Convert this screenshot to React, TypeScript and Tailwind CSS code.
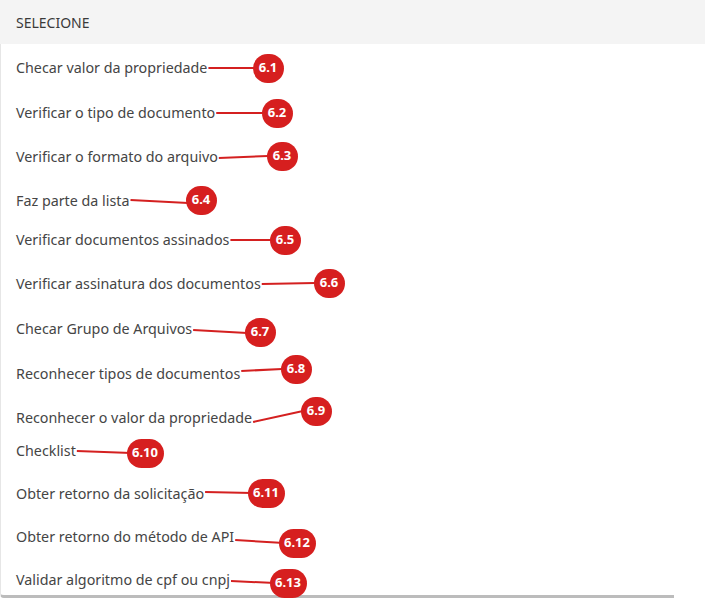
import React, { useLayoutEffect, useRef, useState } from "react";

type Item = {
  label: string;
  mt: string;
  badge: string;
  bx: number;
  by: number;
  bw: number;
  // line start y, line end x/y (start x comes from the measured text end)
  line: [number, number, number];
};

const ITEMS: Item[] = [
  { label: "Checar valor da propriedade", mt: "mt-[14px]", badge: "6.1", bx: 268, by: 68, bw: 31, line: [68, 256, 68] },
  { label: "Verificar o tipo de documento", mt: "mt-[25px]", badge: "6.2", bx: 277, by: 113, bw: 31, line: [113, 263, 113] },
  { label: "Verificar o formato do arquivo", mt: "mt-[24px]", badge: "6.3", bx: 282, by: 156, bw: 31, line: [158, 268, 156] },
  { label: "Faz parte da lista", mt: "mt-[24px]", badge: "6.4", bx: 201, by: 200, bw: 31, line: [200, 188, 203] },
  { label: "Verificar documentos assinados", mt: "mt-[19px]", badge: "6.5", bx: 285, by: 240, bw: 31, line: [240, 272, 240] },
  { label: "Verificar assinatura dos documentos", mt: "mt-[24px]", badge: "6.6", bx: 329, by: 283, bw: 31, line: [284, 315, 283] },
  { label: "Checar Grupo de Arquivos", mt: "mt-[25px]", badge: "6.7", bx: 260, by: 332, bw: 31, line: [330, 247, 333] },
  { label: "Reconhecer tipos de documentos", mt: "mt-[25px]", badge: "6.8", bx: 296, by: 369, bw: 31, line: [371, 282, 369] },
  { label: "Reconhecer o valor da propriedade", mt: "mt-[24px]", badge: "6.9", bx: 316, by: 411, bw: 31, line: [422, 303, 411] },
  { label: "Checklist", mt: "mt-[13px]", badge: "6.10", bx: 145, by: 453, bw: 37, line: [451, 131, 453] },
  { label: "Obter retorno da solicitação", mt: "mt-[23px]", badge: "6.11", bx: 266, by: 493, bw: 37, line: [492, 252, 493] },
  { label: "Obter retorno do método de API", mt: "mt-[23px]", badge: "6.12", bx: 297, by: 543, bw: 37, line: [540, 284, 543] },
  { label: "Validar algoritmo de cpf ou cnpj", mt: "mt-[23px]", badge: "6.13", bx: 288, by: 583, bw: 37, line: [581, 275, 583] },
];

export default function App() {
  const rootRef = useRef<HTMLDivElement>(null);
  const spanRefs = useRef<(HTMLSpanElement | null)[]>([]);
  const [ends, setEnds] = useState<number[]>([]);

  useLayoutEffect(() => {
    const root = rootRef.current;
    if (!root) return;
    const left = root.getBoundingClientRect().left;
    setEnds(spanRefs.current.map((s) => (s ? s.getBoundingClientRect().right - left + 1 : 0)));
  }, []);

  return (
    <div
      ref={rootRef}
      className="relative w-[705px] h-[602px] overflow-hidden bg-white text-[#454545]"
      style={{ fontFamily: "'Noto Sans', Lato, sans-serif" }}
    >
      <div className="h-[44px] bg-[#f4f4f4] flex items-center pl-4 text-[14px] text-[#3a3a3a]">
        SELECIONE
      </div>
      <div className="w-[674px] h-[554px] border-l border-[#e6e6e6] border-b-[3px] border-b-[#bcbcbc] rounded-bl-sm flex flex-col pl-[15px]">
        {ITEMS.map((it, i) => (
          <div key={it.badge} className={`${it.mt} h-5 leading-5 text-[14.3px]`}>
            <span ref={(el) => { spanRefs.current[i] = el; }}>{it.label}</span>
          </div>
        ))}
      </div>

      <svg className="absolute inset-0 pointer-events-none" width={705} height={602}>
        {ITEMS.map((it, i) =>
          ends[i] ? (
            <line
              key={it.badge}
              x1={ends[i]}
              y1={it.line[0]}
              x2={it.line[1]}
              y2={it.line[2]}
              stroke="#d42020"
              strokeWidth={2}
            />
          ) : null
        )}
      </svg>

      {ITEMS.map((it) => (
        <div
          key={it.badge}
          className="absolute flex items-center justify-center rounded-full bg-[#d61f1f] text-white font-bold text-[13px] h-[29px]"
          style={{ left: it.bx - it.bw / 2, top: it.by - 14.5, width: it.bw }}
        >
          {it.badge}
        </div>
      ))}
    </div>
  );
}
